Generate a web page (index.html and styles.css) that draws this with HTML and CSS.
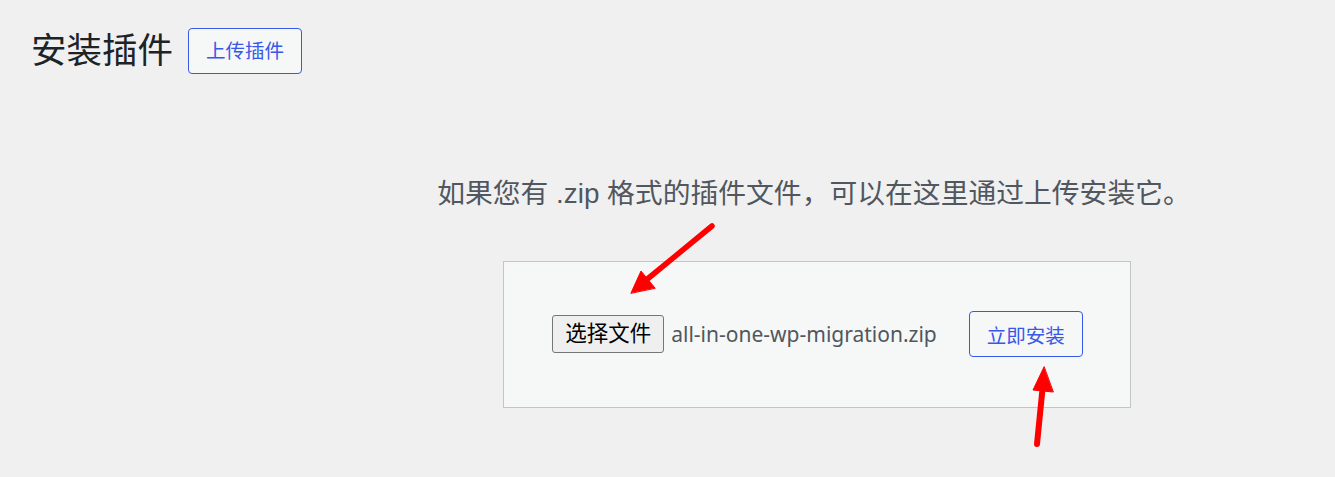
FILE: index.html
```html
<!DOCTYPE html>
<html lang="zh-CN">
  <head>
    <meta charset="UTF-8" />
    <meta name="viewport" content="width=device-width, initial-scale=1.0" />
    <title>安装插件</title>
    <link rel="stylesheet" href="styles.css">
  </head>
  <body>
    <div class="wrap">
      <div class="page-head">
        <h1 class="page-title">安装插件</h1>
        <a class="title-action" href="#">上传插件</a>
      </div>

      <div class="upload-plugin">
        <p class="install-help">如果您有 .zip 格式的插件文件，可以在这里通过上传安装它。</p>
        <form class="upload-form">
          <label class="file-field">
            <span class="file-btn">选择文件</span>
            <span class="file-name">all-in-one-wp-migration.zip</span>
          </label>
          <button type="button" class="install-btn">立即安装</button>
        </form>
      </div>
    </div>

    <!-- annotation arrows -->
    <svg class="arrows" width="1335" height="477" viewBox="0 0 1335 477">
      <g fill="#ff0000" stroke="#ff0000" stroke-linecap="round">
        <line x1="712" y1="226" x2="645" y2="281" stroke-width="5.5" />
        <polygon points="631,293 641,271 655,288" stroke-width="1" stroke-linejoin="round" />
        <line x1="1037" y1="444" x2="1043" y2="384" stroke-width="6" />
        <polygon points="1044,367 1033,390 1053,392" stroke-width="1" stroke-linejoin="round" />
      </g>
    </svg>
  </body>
</html>
```

FILE: styles.css
```css
body {
  margin: 0;
  background-color: #f0f0f1;
  font-family: "Liberation Sans", "Noto Sans CJK SC", sans-serif;
  color: #3c434a;
}
.wrap {
  padding: 28px 0 0 31px;
}
.page-head {
  display: flex;
  align-items: center;
  gap: 15px;
}
.page-title {
  margin: 0;
  font-size: 35.5px;
  font-weight: 400;
  line-height: 46px;
  color: #1d2327;
}
.title-action {
  display: inline-block;
  box-sizing: border-box;
  height: 46px;
  line-height: 44px;
  padding: 0 17px;
  border: 1px solid #3858e9;
  border-radius: 4px;
  background-color: #f6f7f7;
  color: #3858e9;
  font-size: 19.5px;
  text-decoration: none;
}
.upload-plugin {
  display: flex;
  flex-direction: column;
  align-items: center;
  padding-left: 268px;
}
.install-help {
  margin: 100px 6px 0 0;
  font-size: 27.8px;
  line-height: 40px;
  color: #50575e;
}
.upload-form {
  display: flex;
  align-items: center;
  margin-top: 47px;
  padding: 49px 47px 50px 48px;
  border: 1px solid #c3c4c7;
  background-color: #f6f7f7;
}
.file-field {
  display: flex;
  align-items: center;
  gap: 7px;
}
.file-btn {
  box-sizing: border-box;
  height: 38px;
  line-height: 36px;
  padding: 0 12px;
  border: 1px solid #767676;
  border-radius: 3px;
  background-color: #efefef;
  color: #000;
  font-size: 21.5px;
}
.file-name {
  font-family: "Noto Sans", "Noto Sans CJK SC", sans-serif;
  font-size: 21px;
  color: #50575e;
}
.install-btn {
  box-sizing: border-box;
  height: 46px;
  margin-left: 32px;
  padding: 0 17px;
  border: 1px solid #3858e9;
  border-radius: 4px;
  background-color: #f6f7f7;
  color: #3858e9;
  font-family: inherit;
  font-size: 19.5px;
}
.arrows {
  position: absolute;
  top: 0;
  left: 0;
  pointer-events: none;
}
```
